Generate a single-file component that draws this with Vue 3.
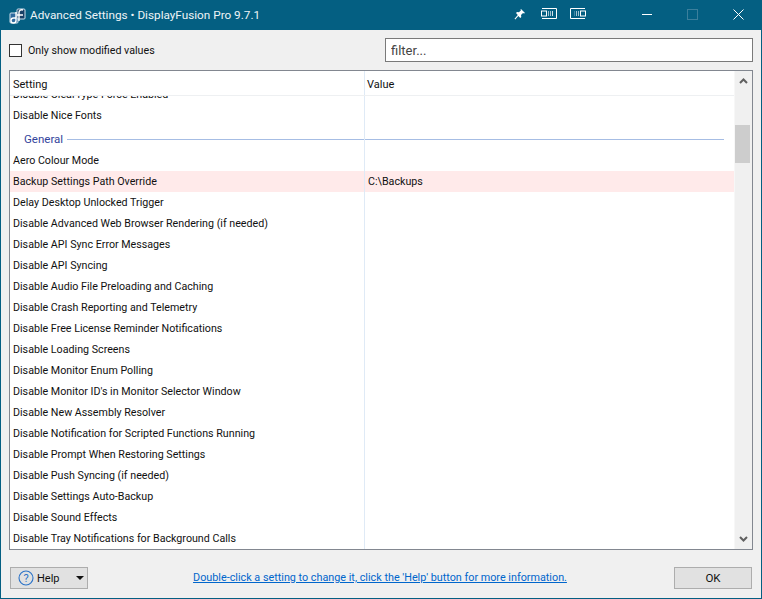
<template>
  <div class="window">
    <header class="titlebar">
      <svg class="app-icon" width="17" height="17" viewBox="0 0 17 17">
        <rect x="1" y="6" width="8" height="10" rx="1" fill="#2f6a9e" stroke="#cfe0ec" />
        <rect x="8" y="2" width="8" height="10" rx="1" fill="#173f66" stroke="#cfe0ec" />
        <path d="M7 5v8.500a2.500 2.500 0 1 1-2.500-2.500H7M10 14V5.500C10 3 12 2.500 14 3M8 8h6" fill="none" stroke="#fff" stroke-width="1.400" />
      </svg>
      <span class="title">Advanced Settings • DisplayFusion Pro 9.7.1</span>
      <div class="tools">
        <svg class="pin" width="12" height="12" viewBox="0 0 12 12">
          <path d="M7 1l4 4-1 .5-1-.5-2 2 .3 2-1 1-2-2-3 3.500-.8-.8L3.800 7 2 5l1-1 2 .3 2-2-.5-1z" fill="#fff" />
        </svg>
        <svg class="move-icon" width="16" height="11" viewBox="0 0 16 11">
          <path d="M1 .5h14.500v10H1" fill="none" stroke="#fff" />
          <rect x="0.500" y="3" width="5" height="5" fill="#045f82" stroke="#fff" />
          <path d="M7.500 3v5M9.500 3v5" stroke="#9fc0d0" />
          <path d="M11.500 3v5" stroke="#cfe0e8" />
        </svg>
        <svg class="move-icon" width="16" height="11" viewBox="0 0 16 11">
          <path d="M15 .5H.5v10H15" fill="none" stroke="#fff" />
          <rect x="10.500" y="3" width="5" height="5" fill="#045f82" stroke="#fff" />
          <path d="M8.500 3v5M6.500 3v5" stroke="#9fc0d0" />
          <path d="M4.500 3v5" stroke="#3f87a5" />
        </svg>
      </div>
      <div class="caption-buttons">
        <span class="cap"><i class="min"></i></span>
        <span class="cap"><i class="max"></i></span>
        <span class="cap">
          <svg width="11" height="11" viewBox="0 0 11 11"><path d="M.5.500l10 10M10.500.500l-10 10" stroke="#fff" /></svg>
        </span>
      </div>
    </header>

    <main class="content">
      <div class="toolbar">
        <label class="check"><i class="box"></i>Only show modified values</label>
        <input class="filter" placeholder="filter..." />
      </div>

      <section class="list">
        <div class="list-main">
          <div class="list-head">
            <div class="col-setting">Setting</div>
            <div class="col-value">Value</div>
          </div>
          <div class="list-body">
            <div class="list-scroll">
              <template v-for="row in rows" :key="row.name">
                <div v-if="row.group" class="group">
                  <span>{{ row.name }}</span><i></i>
                </div>
                <div v-else class="row" :class="{ modified: row.value }">
                  <div class="col-setting">{{ row.name }}</div>
                  <div class="col-value">{{ row.value }}</div>
                </div>
              </template>
            </div>
          </div>
        </div>
        <div class="scrollbar">
          <svg width="9" height="6" viewBox="0 0 9 6"><path d="M1 5l3.500-3.500L8 5" fill="none" stroke="#606060" stroke-width="2" /></svg>
          <div class="track"><div class="thumb"></div></div>
          <svg width="9" height="6" viewBox="0 0 9 6"><path d="M1 1l3.500 3.500L8 1" fill="none" stroke="#606060" stroke-width="2" /></svg>
        </div>
      </section>

      <footer class="footer">
        <button class="btn help">
          <svg width="16" height="16" viewBox="0 0 16 16">
            <circle cx="8" cy="8" r="7" fill="none" stroke="#2a72c8" stroke-width="1.100" />
            <text x="8" y="12" text-anchor="middle" class="q">?</text>
          </svg>
          <span>Help</span>
          <i class="caret"></i>
        </button>
        <a class="hint">Double-click a setting to change it, click the 'Help' button for more information.</a>
        <button class="btn ok">OK</button>
      </footer>
    </main>
  </div>
</template>

<script setup>
const names = [
  'Disable ClearType Force Enabled',
  'Disable Nice Fonts',
]
const general = [
  'Aero Colour Mode',
  'Backup Settings Path Override',
  'Delay Desktop Unlocked Trigger',
  'Disable Advanced Web Browser Rendering (if needed)',
  'Disable API Sync Error Messages',
  'Disable API Syncing',
  'Disable Audio File Preloading and Caching',
  'Disable Crash Reporting and Telemetry',
  'Disable Free License Reminder Notifications',
  'Disable Loading Screens',
  'Disable Monitor Enum Polling',
  "Disable Monitor ID's in Monitor Selector Window",
  'Disable New Assembly Resolver',
  'Disable Notification for Scripted Functions Running',
  'Disable Prompt When Restoring Settings',
  'Disable Push Syncing (if needed)',
  'Disable Settings Auto-Backup',
  'Disable Sound Effects',
  'Disable Tray Notifications for Background Calls',
]

const rows = [
  ...names.map((name) => ({ name })),
  { name: 'General', group: true },
  ...general.map((name) => ({
    name,
    value: name === 'Backup Settings Path Override' ? 'C:\\Backups' : '',
  })),
]
</script>

<style scoped>
.window {
  width: 762px;
  height: 599px;
  display: flex;
  flex-direction: column;
  box-sizing: border-box;
  background: #f0f0f0;
  border: 1px solid #045f82;
  border-top: 0;
  font-family: Roboto, "Open Sans", sans-serif;
  font-size: 10.700px;
  color: #111;
  overflow: hidden;
}

.titlebar {
  height: 30px;
  flex: none;
  display: flex;
  align-items: center;
  margin: 0 -1px;
  padding-left: 9px;
  background: #045f82;
  color: #fff;
}

.app-icon {
  flex: none;
}

.title {
  margin-left: 4px;
  width: 470px;
  font-size: 11.750px;
  color: #eef4f7;
  white-space: nowrap;
}

.tools {
  display: flex;
  align-items: center;
  gap: 13px;
  margin-left: 14px;
  margin-bottom: 3px;
}

.pin {
  margin-right: 2px;
}

.caption-buttons {
  display: flex;
  margin-left: auto;
  margin-right: 1px;
}

.cap {
  width: 45.500px;
  height: 28px;
  padding-bottom: 2px;
  display: flex;
  align-items: center;
  justify-content: center;
}

.min {
  width: 10px;
  height: 1px;
  background: #fff;
}

.max {
  width: 9px;
  height: 9px;
  border: 1px solid #3b7f9c;
}

.content {
  flex: 1;
  display: flex;
  flex-direction: column;
  min-height: 0;
  padding: 8px 8px 9px;
}

.toolbar {
  display: flex;
  align-items: center;
  justify-content: space-between;
  height: 24px;
}

.check {
  display: flex;
  align-items: center;
  gap: 6px;
}

.box {
  width: 11px;
  height: 11px;
  background: #fff;
  border: 1px solid #333;
}

.filter {
  width: 368px;
  height: 24px;
  box-sizing: border-box;
  padding: 0 5px;
  border: 1px solid #7a7a7a;
  background: #fff;
  font: inherit;
  font-size: 13px;
  outline: none;
}

.filter::placeholder {
  color: #444;
  opacity: 1;
}

.list {
  flex: none;
  height: 480px;
  margin-top: 8px;
  display: flex;
  box-sizing: border-box;
  border: 1px solid #828790;
  background: #fff;
}

.list-main {
  flex: 1;
  min-width: 0;
  display: flex;
  flex-direction: column;
}

.list-head {
  position: relative;
  z-index: 1;
  flex: none;
  height: 25px;
  display: flex;
  align-items: center;
  box-sizing: border-box;
  padding-top: 2px;
  border-bottom: 1px solid #eef0f2;
  background: #fff;
  font-size: 11px;
}

.list-head .col-value {
  padding-left: 2px;
  margin-top: -2px;
  padding-top: 2px;
  border-left: 1px solid #dfeaf6;
}

.col-setting {
  width: 354px;
  flex: none;
  box-sizing: border-box;
  padding-left: 3px;
  white-space: nowrap;
}

.col-value {
  flex: 1;
  align-self: stretch;
  display: flex;
  align-items: center;
  padding-left: 4px;
}

.list-body {
  flex: 1;
  min-height: 0;
  overflow: hidden;
  position: relative;
}

/* column divider runs through the group rows too */
.list-body::after {
  content: "";
  position: absolute;
  top: 0;
  bottom: 0;
  left: 354px;
  width: 1px;
  background: #dfeaf6;
}

.list-scroll {
  margin-top: -12px;
}

.row {
  height: 21px;
  display: flex;
  align-items: center;
}

.row.modified {
  background: #ffeaea;
}

.group {
  height: 24px;
  display: flex;
  align-items: center;
  padding: 2px 10px 0 14px;
  box-sizing: border-box;
  color: #33449c;
  font-size: 11.500px;
}

.group i {
  flex: 1;
  height: 1px;
  margin-left: 4px;
  background: #a6bde4;
}

.scrollbar {
  width: 18px;
  flex: none;
  display: flex;
  flex-direction: column;
  align-items: center;
  background: #f0f0f0;
  border-left: 1px solid #f7f7f7;
  padding: 7px 0;
  box-sizing: border-box;
}

.track {
  flex: 1;
  width: 100%;
  padding-top: 41px;
  box-sizing: border-box;
}

.thumb {
  height: 38px;
  margin: 0 2px 0 0;
  background: #cdcdcd;
}

.footer {
  flex: 1;
  display: flex;
  align-items: flex-end;
  justify-content: space-between;
  padding: 0 1px 0 1px;
}

.btn {
  height: 22px;
  box-sizing: border-box;
  border: 1px solid #adadad;
  background: #e1e1e1;
  font: inherit;
  color: #111;
  padding: 0;
}

.help {
  width: 78px;
  display: flex;
  align-items: center;
  padding-left: 7px;
}

.help span {
  margin-left: 3px;
  font-size: 11px;
}

.q {
  font-size: 11px;
  fill: #2a72c8;
}

.caret {
  margin-left: auto;
  margin-right: 3px;
  width: 0;
  height: 0;
  border-left: 4px solid transparent;
  border-right: 4px solid transparent;
  border-top: 4px solid #111;
}

.hint {
  color: #0066cc;
  text-decoration: underline;
  font-size: 10.800px;
  height: 18px;
  margin-right: 2px;
}

.ok {
  width: 78px;
  font-size: 11.500px;
}
</style>
